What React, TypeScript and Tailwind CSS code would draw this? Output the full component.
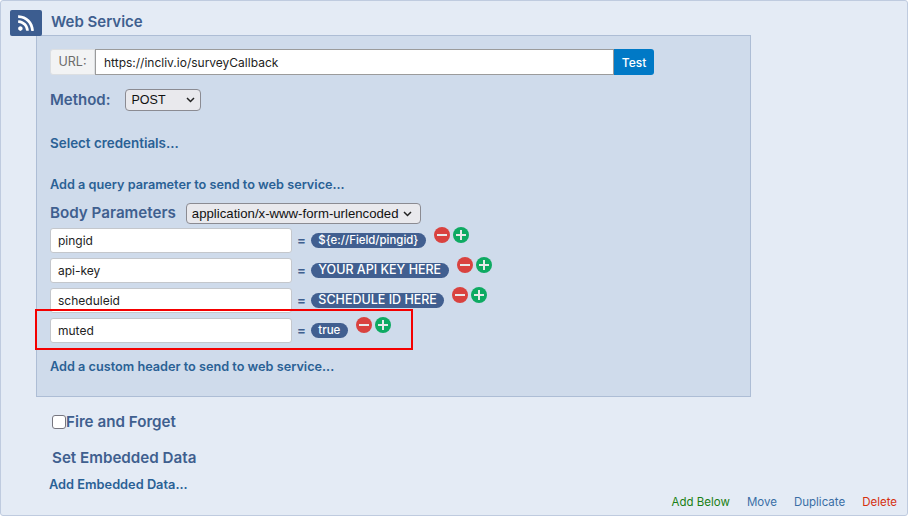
import { FaRss } from 'react-icons/fa'

const params = [
  { name: 'pingid', value: '${e://Field/pingid}', size: 'text-[11.4px]' },
  { name: 'api-key', value: 'YOUR API KEY HERE', size: 'text-[12.5px]' },
  { name: 'scheduleid', value: 'SCHEDULE ID HERE', size: 'text-[12.5px]' },
  { name: 'muted', value: 'true', size: 'text-[11.5px]' },
]

function RoundButton({ kind }: { kind: 'minus' | 'plus' }) {
  const color = kind === 'minus' ? 'bg-[#d9423f]' : 'bg-[#0eaa62]'
  return (
    <span className={`relative block h-[16px] w-[16px] rounded-full ${color}`}>
      <span className="absolute left-[3px] top-[7px] h-[2px] w-[10px] bg-[#e9e9e9]" />
      {kind === 'plus' && <span className="absolute left-[7px] top-[3px] h-[10px] w-[2px] bg-[#e9e9e9]" />}
    </span>
  )
}

function ParamRow({ name, value, size }: { name: string; value: string; size: string }) {
  return (
    <div className="flex h-[25px] items-center">
      <div className="flex h-[25px] w-[242px] items-center rounded-[3px] border border-[#c4c7cc] bg-white pl-[7px] text-[12px] text-[#222]">
        {name}
      </div>
      <span className="ml-[5px] text-[13px] font-bold text-[#3f5f8f]">=</span>
      <span className={`ml-[5px] flex h-[15px] items-center whitespace-nowrap rounded-full bg-[#415f90] px-[7.5px] font-medium text-white ${size}`}>
        {value}
      </span>
      <div className="-mt-[11px] ml-[8px] flex gap-[3px]">
        <RoundButton kind="minus" />
        <RoundButton kind="plus" />
      </div>
    </div>
  )
}

export default function App() {
  return (
    <div className="relative h-[516px] w-[908px] overflow-hidden rounded-[3px] border border-[#bfcbdf] bg-[#e4ebf5] font-['Inter',sans-serif]">
      <div className="flex h-[34px] items-start pl-[9px] pt-[9px]">
        <div className="flex h-[26px] w-[32px] items-center justify-center rounded-[2px] bg-[#3c5d90] text-white">
          <FaRss size={18} />
        </div>
        <span className="ml-[9px] text-[15px] font-semibold leading-[23px] text-[#3f5f8f]">Web Service</span>
      </div>

      <div className="ml-[35px] h-[362px] w-[715px] border border-[#adbdd5] bg-[#cfdbeb] pl-[13px] pt-[13px]">
        <div className="flex h-[26px] w-[604px]">
          <div className="flex w-[45px] items-center justify-center rounded-l-[3px] border border-[#dcdfe2] bg-[#f2f3f4] pt-[1px] text-[12.5px] text-[#6b6b6b]">
            URL:
          </div>
          <div className="flex w-[519px] items-center border border-[#9b9b9b] bg-white pl-[8px] pt-[1px] text-[12px] text-[#222]">
            https://incliv.io/surveyCallback
          </div>
          <div className="flex w-[40px] items-center justify-center rounded-r-[3px] bg-[#0079c6] pt-[1px] text-[12px] font-medium text-white">
            Test
          </div>
        </div>

        <div className="mt-[14px] flex h-[22px] items-center">
          <span className="text-[15px] font-semibold text-[#3f5f8f]">Method:</span>
          <div className="ml-[14px] flex h-[22px] w-[76px] items-center justify-between rounded-[4px] border border-[#8b8b92] bg-[#e9e9ed] pl-[6px] pr-[5px] font-['Liberation_Sans',sans-serif] text-[12.5px] text-[#111]">
            POST
            <svg width="9" height="6" viewBox="0 0 9 6" fill="none" stroke="#222" strokeWidth="1.5">
              <path d="M1 1l3.5 3.5L8 1" />
            </svg>
          </div>
        </div>

        <div className="mt-[22px] text-[13.4px] font-semibold text-[#2a6195]">Select credentials...</div>
        <div className="mt-[22px] text-[12.7px] font-semibold text-[#2a6195]">Add a query parameter to send to web service...</div>

        <div className="mt-[9px] flex h-[21px] items-center">
          <span className="text-[15.2px] font-semibold text-[#3f5f8f]">Body Parameters</span>
          <div className="ml-[10px] flex h-[21px] w-[235px] items-center justify-between whitespace-nowrap rounded-[4px] border border-[#8b8b92] bg-[#e9e9ed] pl-[5px] pr-[8px] font-['Liberation_Sans',sans-serif] text-[13.2px] text-[#111]">
            application/x-www-form-urlencoded
            <svg width="9" height="6" viewBox="0 0 9 6" fill="none" stroke="#222" strokeWidth="1.5">
              <path d="M1 1l3.5 3.5L8 1" />
            </svg>
          </div>
        </div>

        <div className="mt-[4px] flex flex-col gap-[5px]">
          {params.map((p) => (
            <ParamRow key={p.name} {...p} />
          ))}
        </div>

        <div className="mt-[14px] text-[12.7px] font-semibold text-[#2a6195]">Add a custom header to send to web service...</div>
      </div>

      <div className="ml-[51px] mt-[14px] flex items-center">
        <span className="h-[14px] w-[14px] rounded-[3px] border border-[#767680] bg-white" />
        <span className="text-[15.2px] font-semibold text-[#3f5f8f]">Fire and Forget</span>
      </div>
      <div className="ml-[51px] mt-[13px] text-[15.2px] font-semibold text-[#3f5f8f]">Set Embedded Data</div>
      <div className="ml-[48px] mt-[5px] text-[12.8px] font-semibold text-[#2a6195]">Add Embedded Data...</div>

      {/* highlight box over the last row */}
      <div className="absolute left-[34px] top-[308px] h-[41px] w-[378px] border-[2px] border-[#f40000]" />

      <div className="absolute bottom-[4px] right-[10px] flex gap-[17px] text-[11.5px]">
        <span className="text-[#1a7f14]">Add Below</span>
        <span className="text-[#3a6ea5]">Move</span>
        <span className="text-[#3a6ea5]">Duplicate</span>
        <span className="text-[#d6300f]">Delete</span>
      </div>
    </div>
  )
}
